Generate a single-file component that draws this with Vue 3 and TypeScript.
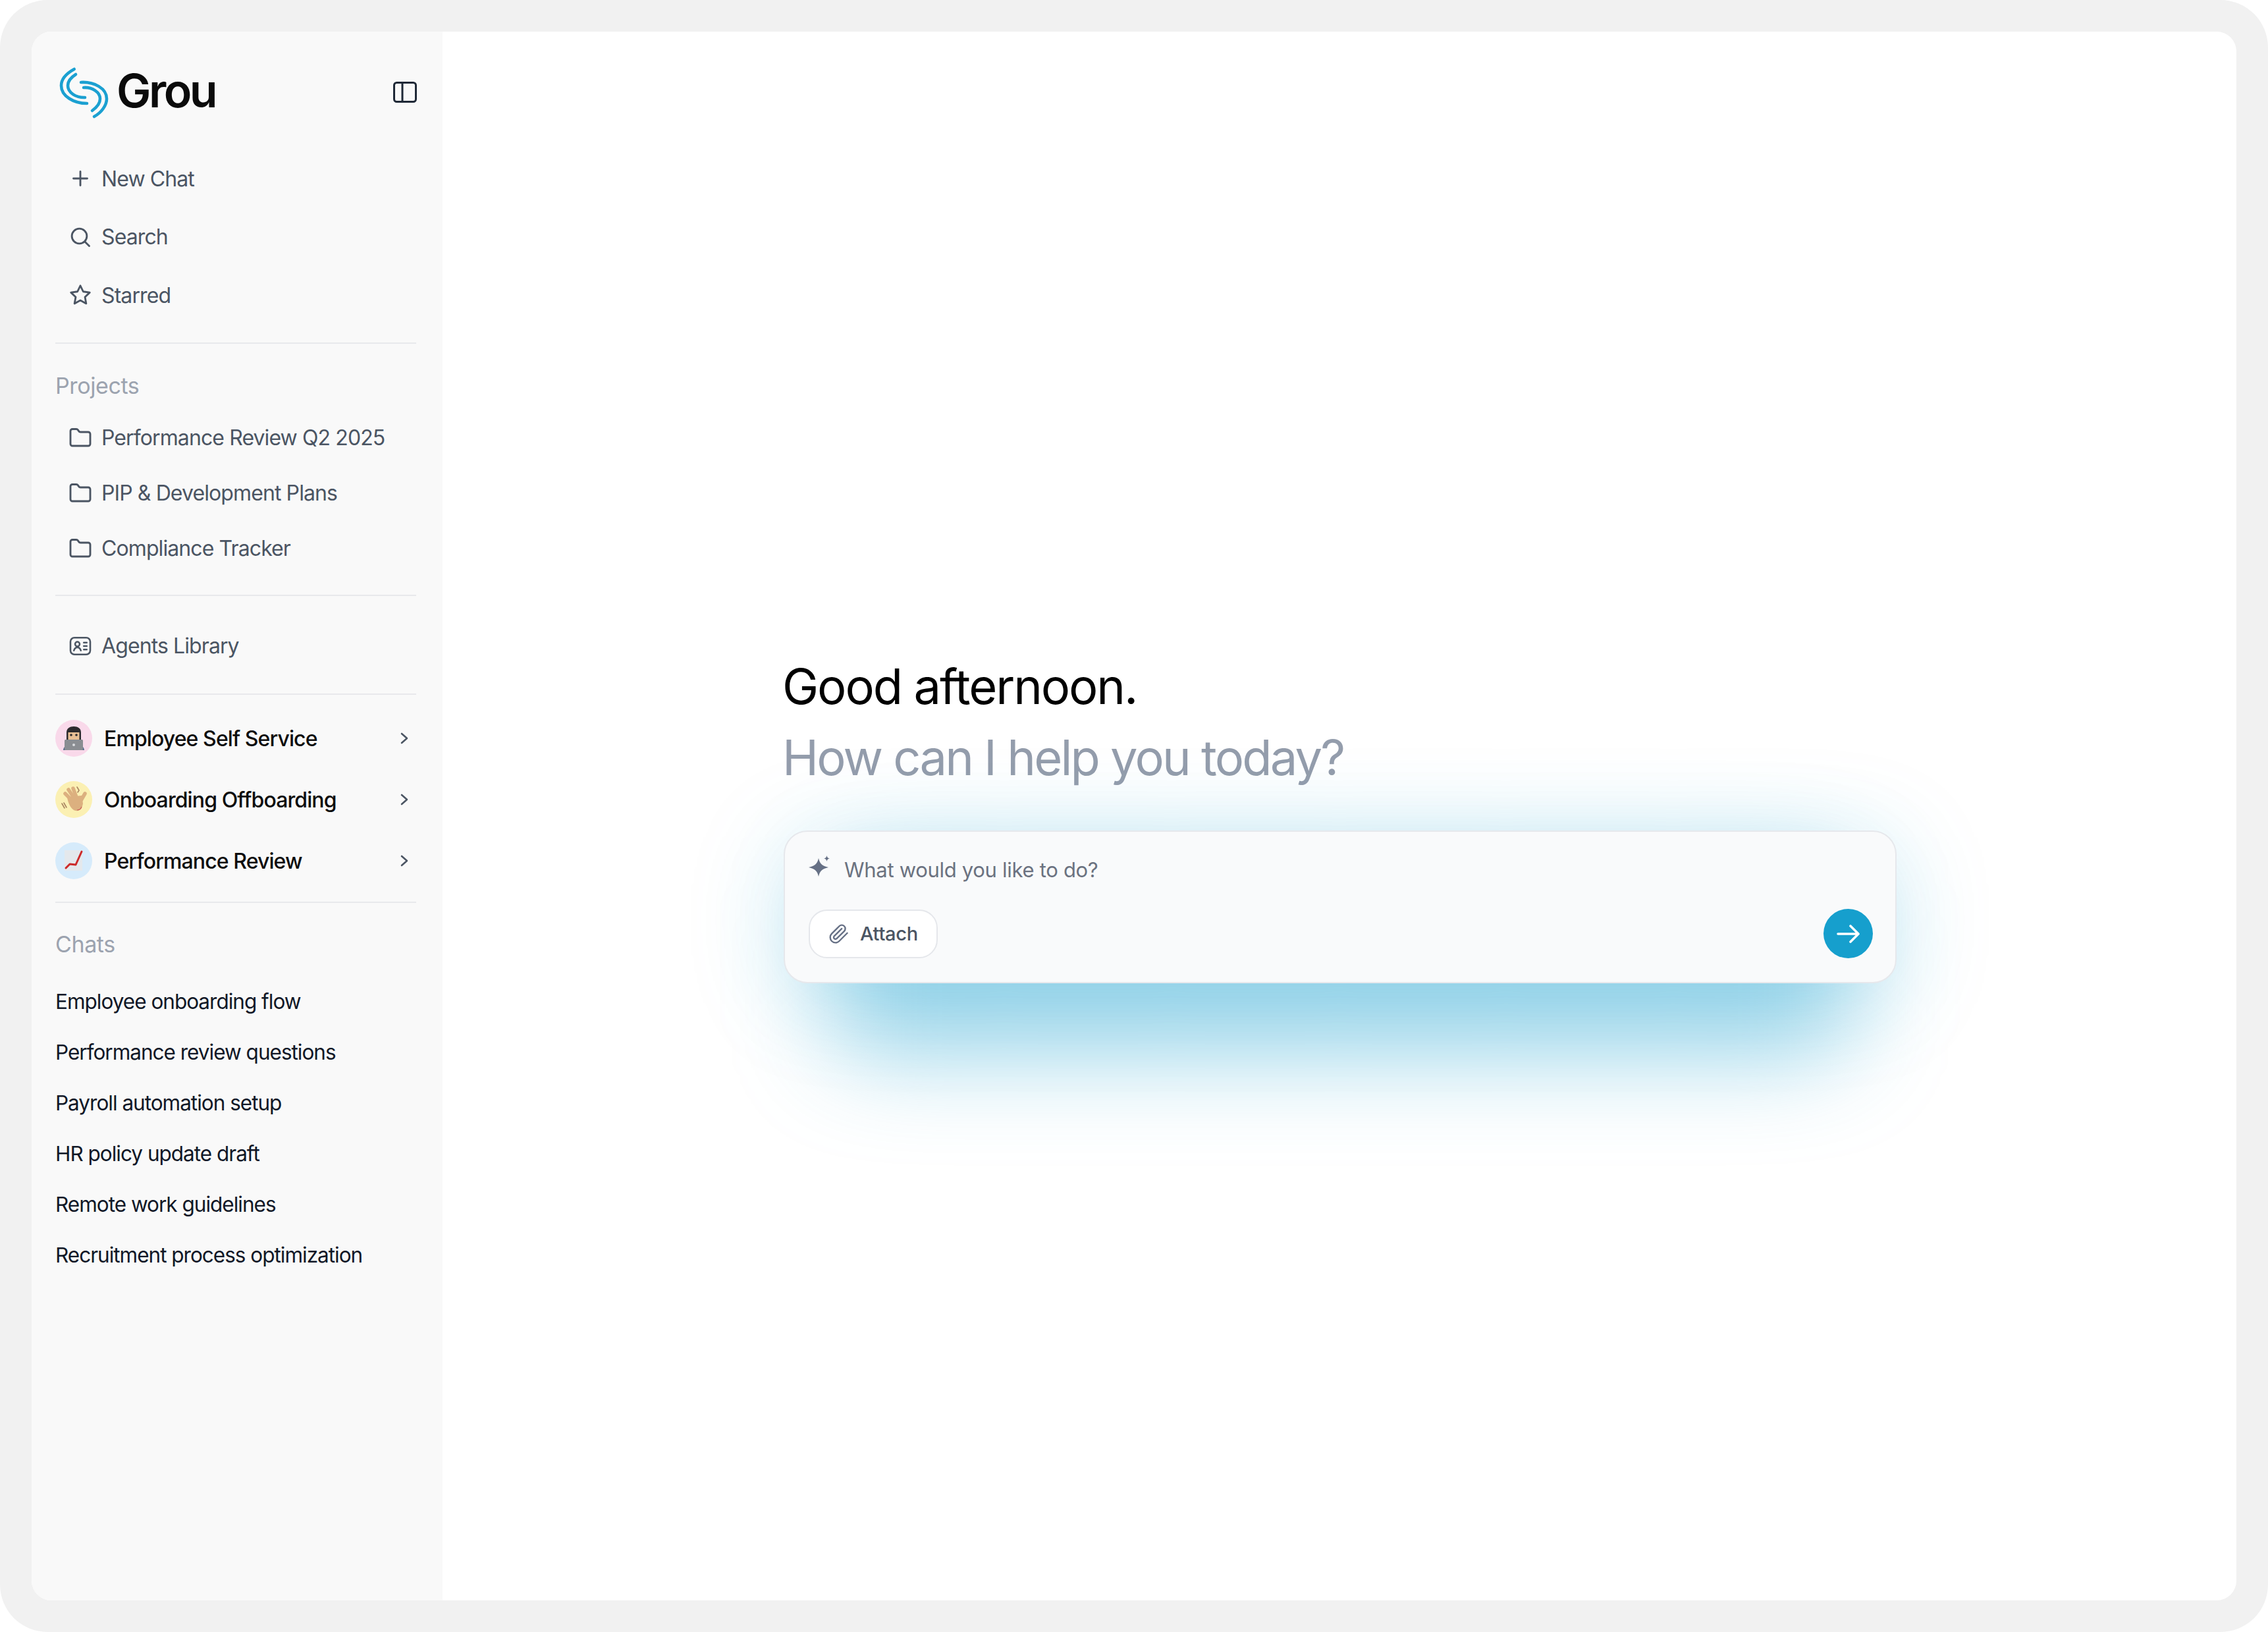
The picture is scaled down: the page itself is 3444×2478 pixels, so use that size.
<script setup lang="ts">
const nav = [
  { label: 'New Chat', icon: 'plus' },
  { label: 'Search', icon: 'search' },
  { label: 'Starred', icon: 'star' },
]
const projects = ['Performance Review Q2 2025', 'PIP & Development Plans', 'Compliance Tracker']
const agents = [
  { label: 'Employee Self Service', kind: 'tech' },
  { label: 'Onboarding Offboarding', kind: 'hand' },
  { label: 'Performance Review', kind: 'chart' },
]
const chats = [
  'Employee onboarding flow',
  'Performance review questions',
  'Payroll automation setup',
  'HR policy update draft',
  'Remote work guidelines',
  'Recruitment process optimization',
]
</script>

<template>
  <div class="frame">
    <div class="window">
      <aside class="sidebar">
        <div class="brand">
          <div class="brand-left">
            <svg class="logo" viewBox="0 0 80 84" fill="none" stroke="#1ba0d1" stroke-width="4.6" stroke-linecap="round">
              <path d="M24.7 5C12 12 5 21 5 30C5 46 24 57 44 57" />
              <path d="M27 13C19 18 15 24 15 30C15 41 28 48.5 41 48" />
              <path d="M35 25C55 24 74 34 74 50C74 60 66 71 55 77" />
              <path d="M39 33C52 32 64 40 64 50C64 57 59 63 52 68" />
            </svg>
            <span class="wordmark">Grou</span>
          </div>
          <svg class="panel" viewBox="0 0 36 32" fill="none" stroke="#1f2937" stroke-width="3">
            <rect x="1.5" y="1.5" width="33" height="29" rx="4" />
            <path d="M14 1.5V30.5" />
          </svg>
        </div>

        <nav class="nav">
          <div v-for="n in nav" :key="n.label" class="row nav-row">
            <svg class="icon" viewBox="0 0 24 24" fill="none" stroke="#4b5563" stroke-width="1.9" stroke-linecap="round" stroke-linejoin="round">
              <template v-if="n.icon === 'plus'"><path d="M5 12h14M12 5v14" /></template>
              <template v-else-if="n.icon === 'search'"><circle cx="11" cy="11" r="7.6" /><path d="m21 21-4.4-4.4" /></template>
              <path v-else d="M12 2.5l2.9 6 6.6.9-4.8 4.6 1.2 6.6-5.9-3.2-5.9 3.2 1.2-6.6-4.8-4.6 6.6-.9z" />
            </svg>
            <span>{{ n.label }}</span>
          </div>
        </nav>

        <div class="divider d1"></div>
        <div class="section s1">Projects</div>
        <div class="projects">
          <div v-for="p in projects" :key="p" class="row project-row">
            <svg class="icon" viewBox="0 0 24 24" fill="none" stroke="#4b5563" stroke-width="1.9" stroke-linecap="round" stroke-linejoin="round">
              <path d="M20 20a2 2 0 0 0 2-2V8a2 2 0 0 0-2-2h-7.9a2 2 0 0 1-1.69-.9L9.6 3.9A2 2 0 0 0 7.93 3H4a2 2 0 0 0-2 2v13a2 2 0 0 0 2 2Z" />
            </svg>
            <span>{{ p }}</span>
          </div>
        </div>

        <div class="divider d2"></div>
        <div class="row project-row library">
          <svg class="icon" viewBox="0 0 24 24" fill="none" stroke="#4b5563" stroke-width="1.7" stroke-linecap="round" stroke-linejoin="round">
            <rect x="2" y="3.5" width="20" height="17" rx="4" />
            <circle cx="9" cy="10" r="2.3" />
            <path d="M5.5 16.5c.6-2.2 2-3.2 3.5-3.2s2.900 1 3.500 3.200M15.500 8.500h3M15.500 12h3M15.500 15.500h3" />
          </svg>
          <span>Agents Library</span>
        </div>
        <div class="divider d3"></div>

        <div class="agents">
          <div v-for="a in agents" :key="a.label" class="agent-row">
            <svg class="avatar" viewBox="0 0 56 56">
              <template v-if="a.kind === 'tech'">
                <circle cx="28" cy="28" r="28" fill="#f9d9ea" />
                <path d="M12 46c1-7 6-9 16-9s15 2 16 9z" fill="#51688a" />
                <path d="M17 19c0-6 5-9 11-9s11 3 11 9v11H17z" fill="#2c2a2e" />
                <path d="M19.500 19h17v10c0 3-3 6-8.500 6s-8.500-3-8.500-6z" fill="#e8bf95" />
                <circle cx="24" cy="23" r="1.800" fill="#2c2a2e" /><circle cx="32" cy="23" r="1.800" fill="#2c2a2e" />
                <rect x="14" y="30" width="28" height="16" rx="1.500" fill="#8a8d92" />
                <circle cx="28" cy="38" r="2" fill="#d8dade" />
              </template>
              <template v-else-if="a.kind === 'hand'">
                <circle cx="28" cy="28" r="28" fill="#fbf0b3" />
                <g stroke="#dcb07f" stroke-width="5.500" stroke-linecap="round" fill="none">
                  <path d="M27 31 15 19" /><path d="M30 28 20 13" /><path d="M33 27 27 11" /><path d="M38 31l7-12" />
                </g>
                <path d="M18 24 40 22 42 34C41 41 37 46 31 45 24 44 19 33 18 24Z" fill="#dcb07f" />
                <path d="M33 44c3 0 6-2 7-5" stroke="#c9605a" stroke-width="1.200" fill="none" />
                <path d="M33 9l3 5-2 3M10 34l4 7M13 33l4 7" stroke="#a98460" stroke-width="1.600" fill="none" stroke-linecap="round" />
              </template>
              <template v-else>
                <circle cx="28" cy="28" r="28" fill="#d6ebfb" />
                <rect x="14" y="12" width="27" height="31" fill="#e4e8ec" />
                <path d="M16 39l6-6 9 1 9-20" stroke="#cc2a2a" stroke-width="3" fill="none" stroke-linejoin="round" stroke-linecap="round" />
              </template>
            </svg>
            <span class="agent-label">{{ a.label }}</span>
            <svg class="chevron" viewBox="0 0 16 24" fill="none" stroke="#4b5563" stroke-width="2.600" stroke-linecap="round" stroke-linejoin="round">
              <path d="M4 5l8 7-8 7" />
            </svg>
          </div>
        </div>

        <div class="divider d4"></div>
        <div class="section s2">Chats</div>
        <div class="chats">
          <div v-for="c in chats" :key="c" class="chat-row">{{ c }}</div>
        </div>
      </aside>

      <main class="main">
        <div class="center">
          <h1 class="hello">Good afternoon.</h1>
          <h2 class="sub">How can I help you today?</h2>
          <div class="card">
            <div class="prompt">
              <svg class="spark" viewBox="0 0 36 38" fill="#667085">
                <path d="M15 6c2 8.500 5 11.500 15 14-10 2.500-13 5.500-15 14-2-8.500-5-11.500-15-14 10-2.500 13-5.500 15-14z" />
                <path d="M27.500 2c.6 3 1.400 3.800 4.500 4.500-3.100.7-3.900 1.500-4.500 4.500-.6-3-1.400-3.800-4.500-4.500 3.100-.7 3.900-1.500 4.500-4.500z" />
              </svg>
              <span>What would you like to do?</span>
            </div>
            <div class="actions">
              <div class="attach">
                <svg class="clip" viewBox="0 0 24 24" fill="none" stroke="#667085" stroke-width="1.800" stroke-linecap="round" stroke-linejoin="round">
                  <path d="m21.440 11.050-9.190 9.190a6 6 0 0 1-8.490-8.490l8.570-8.570A4 4 0 1 1 18 8.840l-8.590 8.570a2 2 0 0 1-2.830-2.830l8.490-8.480" />
                </svg>
                <span>Attach</span>
              </div>
              <div class="send">
                <svg viewBox="0 0 36 36" fill="none" stroke="#fff" stroke-width="3.600" stroke-linecap="round" stroke-linejoin="round">
                  <path d="M2 18h31M21 6l12 12-12 12" />
                </svg>
              </div>
            </div>
          </div>
        </div>
      </main>
    </div>
  </div>
</template>

<style>
html, body { margin: 0; background: #fff; }
</style>

<style scoped>
.frame {
  width: 3444px;
  height: 2478px;
  box-sizing: border-box;
  padding: 48px;
  background: #f1f1f1;
  border-radius: 72px;
  font-family: Inter, "Liberation Sans", sans-serif;
}
.window {
  display: flex;
  height: 100%;
  border-radius: 30px;
  overflow: hidden;
  background: #fff;
}
.sidebar {
  width: 624px;
  flex: none;
  box-sizing: border-box;
  padding: 50px 40px 0 36px;
  background: #f9f9f9;
}
.brand {
  display: flex;
  align-items: center;
  justify-content: space-between;
  height: 80px;
}
.brand-left { display: flex; align-items: center; gap: 9px; margin-left: 4px; }
.logo { width: 80px; height: 84px; flex: none; margin-top: 7px; }
.wordmark {
  font-size: 70px;
  font-weight: 600;
  letter-spacing: -3.500px;
  color: #0b0b0b;
  line-height: 80px;
}
.panel { width: 36px; height: 32px; margin-right: -1px; margin-top: 3px; }
.nav { margin-top: 49px; }
.row {
  display: flex;
  align-items: center;
  gap: 14px;
  padding-left: 20px;
  color: #4b5563;
  font-size: 32px;
  letter-spacing: -0.9px;
}
.nav-row { height: 88.500px; }
.project-row { height: 84px; }
.icon { width: 36px; height: 36px; flex: none; }
.divider { height: 2px; background: #e8e9ec; }
.d1 { margin-top: 27px; }
.d2 { margin-top: 28px; }
.d3 { margin-top: 30px; }
.d4 { margin-top: 15px; }
.section {
  font-size: 34px;
  line-height: 48px;
  color: #9ca3af;
  letter-spacing: -0.4px;
}
.s1 { margin-top: 40px; }
.s2 { margin-top: 39px; }
.projects { margin-top: 13px; }
.library { margin-top: 34px; }
.agents { margin-top: 20px; }
.agent-row {
  display: flex;
  align-items: center;
  height: 93px;
  gap: 18px;
}
.avatar { width: 56px; height: 56px; flex: none; }
.agent-label {
  flex: 1;
  font-size: 32px;
  font-weight: 500;
  letter-spacing: -0.9px;
  color: #0d0d0d;
}
.chevron { width: 16px; height: 24px; margin-right: 10px; }
.chats { margin-top: 24px; }
.chat-row {
  height: 77.200px;
  line-height: 77.200px;
  font-size: 31.500px;
  letter-spacing: -1px;
  color: #111827;
  white-space: nowrap;
}
.main {
  flex: 1;
  display: flex;
  align-items: center;
  justify-content: center;
}
.center { width: 1692px; margin-top: 3px; isolation: isolate; }
.hello, .sub {
  margin: 0;
  font-weight: 400;
  font-size: 74px;
  line-height: 108px;
}
.hello { color: #000; letter-spacing: -2.100px; }
.sub { color: #949dac; letter-spacing: -2.800px; }
.card {
  position: relative;
  margin: 57px 0 0 2px;
  box-sizing: border-box;
  height: 232px;
  padding: 27px 34px 0 36px;
  background: #f9fafb;
  border: 2px solid #e6e8ec;
  border-radius: 36px;
  box-shadow: 0 20px 150px 0 rgba(23, 160, 208, 0.17);
}
.card::before {
  content: "";
  position: absolute;
  z-index: -1;
  left: 70px;
  right: 70px;
  top: 60px;
  bottom: -110px;
  border-radius: 60px;
  background: rgba(23, 160, 208, 0.42);
  filter: blur(75px);
}
.prompt {
  display: flex;
  align-items: center;
  gap: 18px;
  height: 60px;
  font-size: 31px;
  letter-spacing: -0.3px;
  color: #6b7280;
}
.spark { width: 36px; height: 38px; flex: none; margin-top: -8px; }
.actions {
  display: flex;
  align-items: center;
  justify-content: space-between;
  margin-top: 30px;
}
.attach {
  display: flex;
  align-items: center;
  gap: 16px;
  box-sizing: border-box;
  height: 74px;
  padding: 0 28px 0 28px;
  background: #fff;
  border: 2px solid #e5e7eb;
  border-radius: 28px;
  font-size: 29px;
  font-weight: 500;
  letter-spacing: -0.3px;
  color: #4b5563;
}
.clip { width: 32px; height: 32px; flex: none; }
.send {
  width: 75px;
  height: 75px;
  border-radius: 50%;
  background: #169fcd;
  display: flex;
  align-items: center;
  justify-content: center;
}
.send svg { width: 36px; height: 36px; }
</style>
